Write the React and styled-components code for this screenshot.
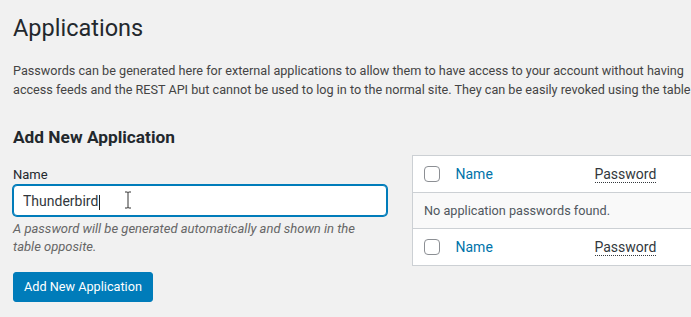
import React from 'react'
import styled, { createGlobalStyle } from 'styled-components'

const GlobalStyle = createGlobalStyle`
  html, body {
    margin: 0;
    padding: 0;
    background: #f1f1f1;
    overflow: hidden;
  }
  body {
    font-family: Roboto, "Liberation Sans", sans-serif;
    font-size: 13px;
    color: #444;
  }
`

const Wrap = styled.div`
  padding: 5px 0 0 13px;
  width: 720px;
`

const Title = styled.h1`
  margin: 0;
  padding: 9px 0 4px;
  color: #23282d;
  font-size: 23.5px;
  font-weight: 400;
  line-height: 29px;
`

const Intro = styled.p`
  margin: 14px 0 0;
  width: 720px;
  line-height: 19px;
  font-size: 12.65px;
  color: #444;
  white-space: nowrap;
`

const Columns = styled.div`
  display: grid;
  grid-template-columns: 374px 1fr;
  column-gap: 25px;
  margin-top: 27px;
`

const FormCol = styled.div`
  display: flex;
  flex-flow: column;
`

const Subtitle = styled.h2`
  margin: 0;
  color: #23282d;
  font-size: 17.3px;
  font-weight: 700;
  line-height: 22px;
`

const Label = styled.label`
  margin-top: 17px;
  color: #23282d;
  font-size: 13px;
  line-height: 20px;
`

const Field = styled.div`
  position: relative;
`

const Input = styled.input`
  box-sizing: border-box;
  display: block;
  width: 100%;
  height: 31px;
  padding: 0 9px;
  margin: 0;
  border: 1px solid #007cba;
  border-radius: 4px;
  box-shadow: 0 0 0 1px #007cba;
  outline: none;
  background: #fff;
  color: #32373c;
  font-family: inherit;
  font-size: 14px;
`

const Caret = styled.span`
  position: absolute;
  left: ${p => p.left}px;
  top: 10px;
  width: 1px;
  height: 15px;
  background: #222;
`

const Cursor = styled.svg`
  position: absolute;
  left: 111px;
  top: 6px;
`

const Hint = styled.p`
  margin: 4px 0 0;
  color: #666;
  font-style: italic;
  font-size: 13px;
  line-height: 18px;
`

const Button = styled.button`
  align-self: flex-start;
  height: 30px;
  margin-top: 16px;
  padding: 0 10px;
  border: 1px solid #007cba;
  border-radius: 3px;
  background: #007cba;
  color: #fff;
  font-family: inherit;
  font-size: 12.7px;
  line-height: 28px;
`

const Table = styled.table`
  align-self: start;
  table-layout: fixed;
  width: 400px;
  margin-top: 29px;
  border: 1px solid #ccd0d4;
  border-collapse: collapse;
  background: #fff;
`

const HeadCell = styled.th`
  height: 36px;
  padding: 0 10px;
  text-align: left;
  font-weight: 400;
  font-size: 14px;
  border-${p => (p.foot ? 'top' : 'bottom')}: 1px solid #ccd0d4;
`

const CheckCell = styled(HeadCell)`
  padding: 0 0 0 11px;
`

const Check = styled.span`
  display: block;
  box-sizing: border-box;
  width: 16px;
  height: 16px;
  border: 1px solid #8c8f94;
  border-radius: 4px;
  background: #fff;
`

const SortLink = styled.a`
  color: #0073aa;
  text-decoration: none;
`

const Abbr = styled.abbr`
  color: #32373c;
  text-decoration: none;
  border-bottom: 1px dotted #32373c;
`

const EmptyRow = styled.tr`
  background: #f9f9f9;
`

const EmptyCell = styled.td`
  height: 35px;
  padding: 0 11px;
  color: #50575e;
  font-size: 12.7px;
`

const Header = ({ foot }) => (
  <tr>
    <CheckCell foot={foot}>
      <Check />
    </CheckCell>
    <HeadCell foot={foot}>
      <SortLink href="#">Name</SortLink>
    </HeadCell>
    <HeadCell foot={foot}>
      <Abbr>Password</Abbr>
    </HeadCell>
  </tr>
)

export default function App() {
  return (
    <>
      <GlobalStyle />
      <Wrap>
        <Title>Applications</Title>
        <Intro>
          Passwords can be generated here for external applications to allow them to have access to your account without having
          <br />
          access feeds and the REST API but cannot be used to log in to the normal site. They can be easily revoked using the table
        </Intro>
        <Columns>
          <FormCol>
            <Subtitle>Add New Application</Subtitle>
            <Label>Name</Label>
            <Field>
              <Input defaultValue="Thunderbird" readOnly />
              <Caret left={86} />
              <Cursor width="8" height="18" viewBox="0 0 8 18">
                <path d="M1 1h2.5L4 1.8 4.5 1H7M4 1.8v14.4M1 17h2.5l.5-.8.5.8H7" fill="none" stroke="#fff" strokeWidth="2.2" />
                <path d="M1 1h2.5L4 1.8 4.5 1H7M4 1.8v14.4M1 17h2.5l.5-.8.5.8H7" fill="none" stroke="#333" strokeWidth="1" />
              </Cursor>
            </Field>
            <Hint>
              A password will be generated automatically and shown in the
              <br />
              table opposite.
            </Hint>
            <Button>Add New Application</Button>
          </FormCol>
          <Table>
            <colgroup>
              <col style={{ width: 33 }} />
              <col style={{ width: 139 }} />
              <col />
            </colgroup>
            <thead>
              <Header />
            </thead>
            <tbody>
              <EmptyRow>
                <EmptyCell colSpan={3}>No application passwords found.</EmptyCell>
              </EmptyRow>
            </tbody>
            <tfoot>
              <Header foot />
            </tfoot>
          </Table>
        </Columns>
      </Wrap>
    </>
  )
}
